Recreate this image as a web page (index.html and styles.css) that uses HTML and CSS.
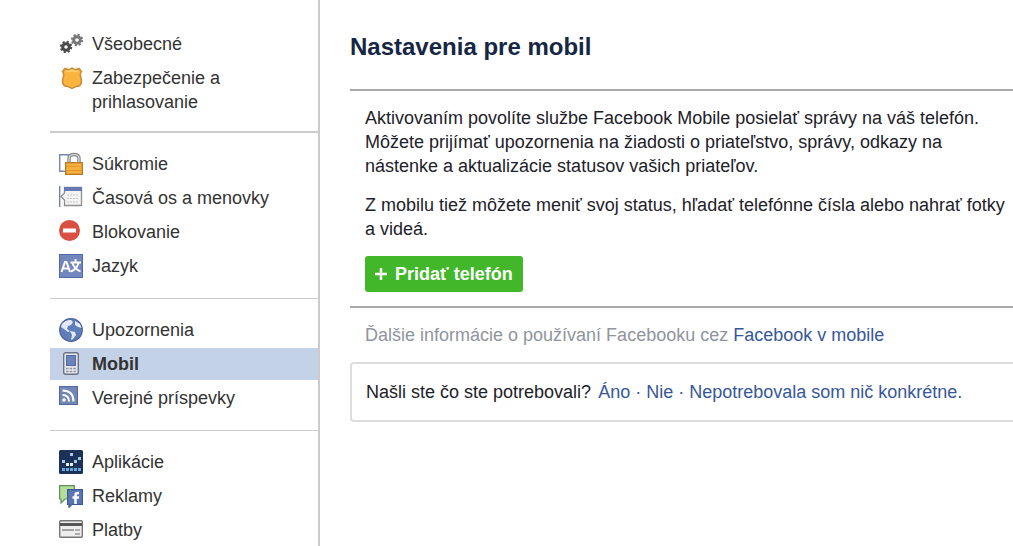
FILE: index.html
```
<!DOCTYPE html>
<html lang="sk">

<head>
    <meta charset="UTF-8">
    <meta name="viewport" content="width=device-width, initial-scale=1.0">
    <title>Nastavenia pre mobil</title>
    <link rel="stylesheet" href="styles.css">
</head>

<body>
    <div class="container">
        <nav class="sidebar">
            <ul class="menu">
                <li><a href="#">
                    <svg class="icon" viewBox="0 0 24 24">
                        <g fill="none">
                            <circle cx="7" cy="15" r="3.3" stroke="#4a4a4a" stroke-width="3" />
                            <circle cx="7" cy="15" r="5.2" stroke="#4a4a4a" stroke-width="2" stroke-dasharray="2.1 1.98" />
                            <circle cx="18" cy="8" r="3.3" stroke="#777" stroke-width="3" />
                            <circle cx="18" cy="8" r="5.2" stroke="#777" stroke-width="2" stroke-dasharray="2.1 1.98" />
                        </g>
                    </svg>
                    <span>Všeobecné</span></a></li>
                <li><a href="#">
                    <svg class="icon" viewBox="0 0 24 24">
                        <path d="M6 2.5Q10 4.500 13 2Q16 4.500 20 2.500L22.500 5.500Q20.500 8 22 12Q23.500 18 20 20Q16 20.500 13 22.500Q10 20.500 6 20Q2.500 18 4 12Q5.500 8 3.500 5.500Z" fill="#f9b53b" stroke="#c68a3c" stroke-width="1.500" />
                        <path d="M7 5Q10 6 13 4.500Q16 6 19 5" fill="none" stroke="#ffd074" stroke-width="1.500" />
                    </svg>
                    <span>Zabezpečenie a prihlasovanie</span></a></li>
            </ul>
            <ul class="menu">
                <li><a href="#">
                    <svg class="icon" viewBox="0 0 24 24">
                        <path d="M.7 2.700H10V19.300H.7Z" fill="#fff" stroke="#7486b4" stroke-width="1.400" />
                        <path d="M10 12V6.500Q10 2.500 15 2.500T20 6.500V12" fill="none" stroke="#8a8a8a" stroke-width="3.500" />
                        <path d="M10 12V6.500Q10 2.500 15 2.500T20 6.500V12" fill="none" stroke="#ddd" stroke-width="1.200" />
                        <rect x="6.700" y="10.700" width="16.600" height="11.600" fill="#f8b13c" stroke="#b97b2c" stroke-width="1.400" />
                        <path d="M8 14.500H22M8 18.500H22" stroke="#e39a2c" />
                    </svg>
                    <span>Súkromie</span></a></li>
                <li><a href="#">
                    <svg class="icon" viewBox="0 0 24 24">
                        <path d="M.7 0V21" stroke="#7084b4" stroke-width="1.400" />
                        <path d="M5.500 1.500H22.500V19.500H5.500V14L2 10.500L5.500 7Z" fill="#f3f3f3" stroke="#8f8f8f" stroke-width="1.300" />
                        <path d="M5 3H23" stroke="#6279b5" stroke-width="4" />
                        <path d="M8 9H20M8 12.500H20M8 16H20" stroke="#c9c9c9" stroke-dasharray="2 1" />
                    </svg>
                    <span>Časová os a menovky</span></a></li>
                <li><a href="#">
                    <svg class="icon" viewBox="0 0 24 24">
                        <circle cx="10.500" cy="10.500" r="10.500" fill="#d95043" />
                        <rect x="4" y="8.500" width="13" height="4" fill="#fff" />
                    </svg>
                    <span>Blokovanie</span></a></li>
                <li><a href="#">
                    <svg class="icon" viewBox="0 0 24 24">
                        <rect x=".5" y=".5" width="23" height="23" fill="#7287bd" stroke="#5068a5" />
                        <path d="M2.500 18L6 8H7.500L11 18M4 14.500H9.500" fill="none" stroke="#fff" stroke-width="2" />
                        <path d="M11.500 8.500H22M16.500 5V8.500M19.500 9Q18 15 12 17.500M13.500 9Q15 14.500 21.500 17.500" fill="none" stroke="#fff" stroke-width="1.900" />
                    </svg>
                    <span>Jazyk</span></a></li>
            </ul>
            <ul class="menu">
                <li><a href="#">
                    <svg class="icon" viewBox="0 0 24 24">
                        <circle cx="12" cy="12" r="11.300" fill="#5f7db8" stroke="#4a639c" stroke-width="1.200" />
                        <path d="M3 6Q7 1.500 12 2L14 4L12 7L9 8L8 11L11 13L9 14L5 11L2 9Z" fill="#e3eaf5" />
                        <path d="M16 3L21 6L22.500 10L19 9L16 7Z" fill="#e3eaf5" />
                        <path d="M11 13L16 14L17 17L14 21L12 22L13 17Z" fill="#e3eaf5" />
                    </svg>
                    <span>Upozornenia</span></a></li>
                <li class="selected"><a href="#">
                    <svg class="icon" viewBox="0 0 24 24">
                        <rect x="4.700" y=".7" width="14.600" height="21.600" rx="2" fill="#e6e8ec" stroke="#6b7386" stroke-width="1.400" />
                        <rect x="7.500" y="3.500" width="9" height="10" fill="#6b83bd" stroke="#53699f" />
                        <path d="M7 16.500H17M7 19.500H17" stroke="#8c93a3" stroke-width="1.500" stroke-dasharray="2.500 1.200" />
                    </svg>
                    <span>Mobil</span></a></li>
                <li><a href="#">
                    <svg class="icon" viewBox="0 0 24 24">
                        <rect x=".5" y=".5" width="18" height="18" fill="#7287b5" stroke="#5068a0" />
                        <circle cx="5" cy="14" r="1.800" fill="#fff" />
                        <path d="M3.500 9Q10 9 10 15.500M3.500 4.500Q14.500 4.500 14.500 15.500" fill="none" stroke="#fff" stroke-width="2" />
                    </svg>
                    <span>Verejné príspevky</span></a></li>
            </ul>
            <ul class="menu">
                <li><a href="#">
                    <svg class="icon" viewBox="0 0 24 24">
                        <rect width="24" height="24" rx="1.500" fill="#1c3158" />
                        <path d="M11 3h3v3h-3zM3 10h3v3H3zM15 10h3v3h-3zM19 7h3v3h-3z" fill="#a9c8e8" />
                        <path d="M7 13h3v3H7zM11 13h3v3h-3z" fill="#e8f2fb" />
                        <path d="M3 18h3v3H3zM7 18h3v3H7zM11 18h3v3h-3zM15 18h3v3h-3zM19 18h3v3h-3z" fill="#68a6dc" />
                    </svg>
                    <span>Aplikácie</span></a></li>
                <li><a href="#">
                    <svg class="icon" viewBox="0 0 24 24">
                        <path d="M.6 1.600H15.400V15H6L2 19V15H.6Z" fill="#b4dd9a" stroke="#64905a" stroke-width="1.200" />
                        <path d="M8.600 5.600H23.400V20.400H13L10 23.400V20.400H8.600Z" fill="#5a76b4" stroke="#3d5a98" stroke-width="1.200" />
                        <path d="M20 9H18.500Q16.500 9 16.500 11.500V20M13.500 13.500H20" fill="none" stroke="#fff" stroke-width="2.500" />
                    </svg>
                    <span>Reklamy</span></a></li>
                <li><a href="#">
                    <svg class="icon" viewBox="0 0 24 24">
                        <rect x=".7" y="2.700" width="22.600" height="16.600" rx="1" fill="#eee" stroke="#777" stroke-width="1.400" />
                        <path d="M1 6.500H23" stroke="#555" stroke-width="3" />
                        <path d="M3 12H15" stroke="#888" stroke-width="1.500" />
                        <path d="M16 12H21M16 16H21" stroke="#999" stroke-width="1.500" />
                    </svg>
                    <span>Platby</span></a></li>
            </ul>
        </nav>

        <main class="content">
            <h1>Nastavenia pre mobil</h1>
            <div class="activate">
                <p>Aktivovaním povolíte službe Facebook Mobile posielať správy na váš telefón. Môžete prijímať upozornenia na žiadosti o priateľstvo, správy, odkazy na nástenke a aktualizácie statusov vašich priateľov.</p>
                <p>Z mobilu tiež môžete meniť svoj status, hľadať telefónne čísla alebo nahrať fotky a videá.</p>
                <button type="button" class="btn">
                    <svg class="plus" viewBox="0 0 12 12">
                        <path d="M6 0V12M0 6H12" stroke="#fff" stroke-width="2.500" />
                    </svg>
                    Pridať telefón
                </button>
            </div>
            <p class="more">Ďalšie informácie o používaní Facebooku cez <a href="#">Facebook v mobile</a></p>
            <div class="feedback">
                <span class="question">Našli ste čo ste potrebovali?</span>
                <span class="answers"><a href="#">Áno</a> · <a href="#">Nie</a> · <a href="#">Nepotrebovala som nič konkrétne.</a></span>
            </div>
        </main>
    </div>
</body>

</html>
```
FILE: styles.css
```
body {
    margin: 0;
    background-color: #fff;
    color: #1d2129;
    font-family: "Liberation Sans", Arial, sans-serif;
    font-size: 18px;
    line-height: 24px;
}

a {
    color: #365899;
    text-decoration: none;
}

.container {
    display: flex;
    min-height: 100vh;
    overflow: hidden;
}

/* sidebar */
.sidebar {
    box-sizing: border-box;
    flex: 0 0 270px;
    margin-left: 50px;
    padding-top: 13px;
    border-right: 2px solid #ccc;
}

.menu {
    display: flex;
    flex-direction: column;
    gap: 2px;
    list-style: none;
    margin: 0;
    padding: 15px 0 16px;
    border-bottom: 1px solid #ccc;
}

.menu:first-child {
    padding-bottom: 13px;
    border-bottom-width: 2px;
}

.menu:last-child {
    padding-bottom: 0;
    border-bottom: 0;
}

.menu a {
    display: flex;
    gap: 9px;
    padding: 4px 40px 4px 9px;
    color: #333;
}

.menu .selected {
    background-color: #c4d2e7;
    font-weight: bold;
}

.icon {
    flex: none;
    width: 24px;
    height: 24px;
}

/* content */
.content {
    flex: 1;
    min-width: 0;
    margin-left: 30px;
}

h1 {
    margin: 0;
    padding: 32px 0 27px;
    color: #162643;
    font-size: 24px;
    line-height: 30px;
}

.activate {
    padding: 15px 0 14px 15px;
    border-top: 2px solid #a9a9a9;
    border-bottom: 2px solid #a9a9a9;
}

.activate p {
    margin: 0 0 15px;
}

.btn {
    display: flex;
    align-items: center;
    gap: 8px;
    height: 36px;
    padding: 0 10px;
    border: 0;
    border-radius: 3px;
    background-color: #42b72a;
    color: #fff;
    font-family: inherit;
    font-size: 18px;
    font-weight: bold;
}

.plus {
    width: 12px;
    height: 12px;
}

.more {
    margin: 0;
    padding: 15px;
    color: #90949c;
}

.feedback {
    margin-right: -4px;
    padding: 16px 14px;
    border: 2px solid #ddd;
    border-radius: 4px;
}

.answers {
    margin-left: 2px;
    color: #365899;
}
```
